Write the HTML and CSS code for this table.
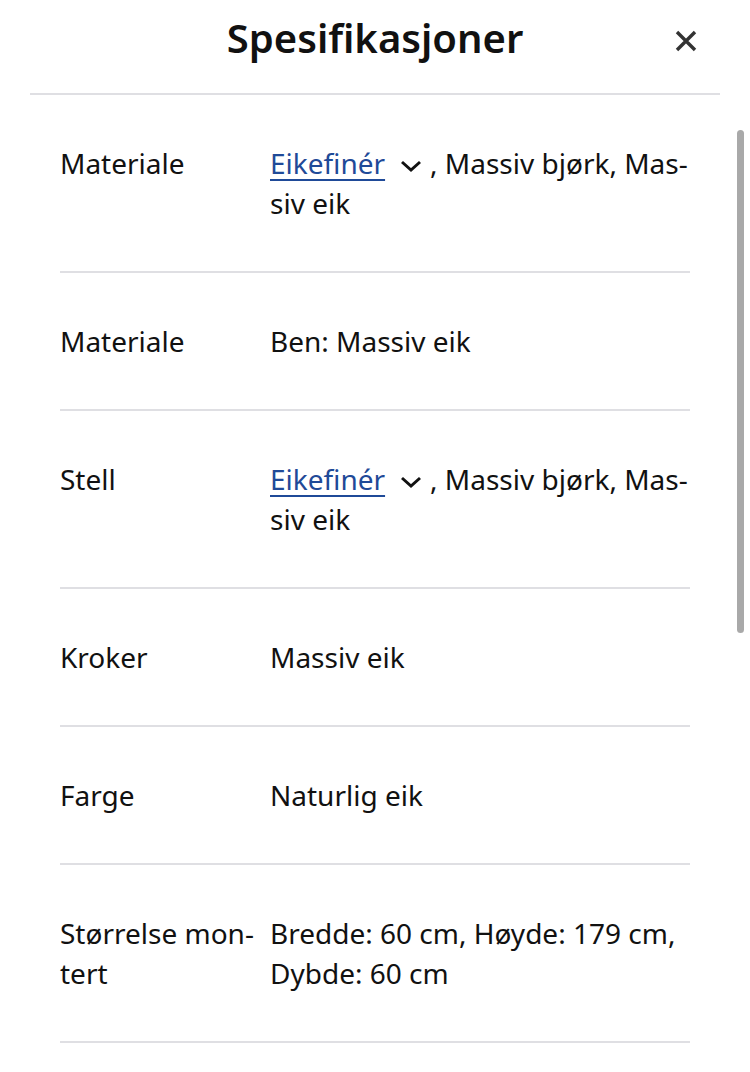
FILE: index.html
```html
<!DOCTYPE html>
<html lang="nb">
<head>
<meta charset="utf-8">
<link rel="stylesheet" href="styles.css">
</head>
<body>
<div class="sheet">
  <header class="head">
    <h1 class="title">Spesifikasjoner</h1>
    <button class="close" aria-label="Lukk">
      <svg width="24" height="24" viewBox="0 0 24 24"><path d="M3 3 L21 21 M21 3 L3 21" stroke="#333" stroke-width="3.4" stroke-linecap="butt" fill="none"/></svg>
    </button>
  </header>
  <div class="list">
    <div class="row">
      <div class="label">Materiale</div>
      <div class="value"><a class="link" href="#">Eikefinér</a><span class="chev"><svg width="24" height="14" viewBox="0 0 24 14"><path d="M3 3 L12 11 L21 3" stroke="#111" stroke-width="3" fill="none"/></svg></span>, Massiv bjørk, Mas&shy;siv eik</div>
    </div>
    <div class="row">
      <div class="label">Materiale</div>
      <div class="value">Ben: Massiv eik</div>
    </div>
    <div class="row">
      <div class="label">Stell</div>
      <div class="value"><a class="link" href="#">Eikefinér</a><span class="chev"><svg width="24" height="14" viewBox="0 0 24 14"><path d="M3 3 L12 11 L21 3" stroke="#111" stroke-width="3" fill="none"/></svg></span>, Massiv bjørk, Mas&shy;siv eik</div>
    </div>
    <div class="row">
      <div class="label">Kroker</div>
      <div class="value">Massiv eik</div>
    </div>
    <div class="row">
      <div class="label">Farge</div>
      <div class="value">Naturlig eik</div>
    </div>
    <div class="row">
      <div class="label">Størrelse mon&shy;tert</div>
      <div class="value">Bredde: 60 cm, Høyde: 179 cm, Dybde: 60 cm</div>
    </div>
  </div>
  <div class="scrollbar"></div>
</div>
</body>
</html>
```
FILE: styles.css
```css
html, body {
  margin: 0;
  padding: 0;
  background: #fff;
}
body {
  font-family: "Noto Sans", "Open Sans", sans-serif;
  color: #111;
  overflow: hidden;
}
.sheet {
  position: relative;
  width: 750px;
  height: 1072px;
}
.head {
  position: relative;
  margin: 0 30px;
  height: 93px;
  border-bottom: 2px solid #dfdfe3;
  display: flex;
  align-items: center;
  justify-content: center;
}
.title {
  margin: 0;
  font-size: 40px;
  font-weight: 600;
  line-height: 1;
  color: #111;
  transform: translateY(-9px);
}
.close {
  position: absolute;
  right: 22px;
  top: 29px;
  width: 24px;
  height: 24px;
  padding: 0;
  border: 0;
  background: none;
  display: block;
}
.close svg { display: block; }
.list {
  margin: 0 60px;
}
.row {
  display: flex;
  padding: 48px 0;
  border-bottom: 2px solid #dfdfe3;
  font-size: 28px;
  line-height: 40px;
}
.label {
  width: 210px;
  flex: none;
}
.value {
  flex: 1;
  margin-right: -4px;
}
.link {
  color: #1f4a98;
  text-decoration: underline;
  text-decoration-thickness: 2px;
  text-underline-offset: 5px;
}
.chev {
  display: inline-block;
  padding: 0 7px 0 14px;
}
.chev svg { vertical-align: 1px; }
.scrollbar {
  position: absolute;
  left: 737px;
  top: 130px;
  width: 7px;
  height: 503px;
  border-radius: 4px;
  background: #a9a9a9;
}
```
